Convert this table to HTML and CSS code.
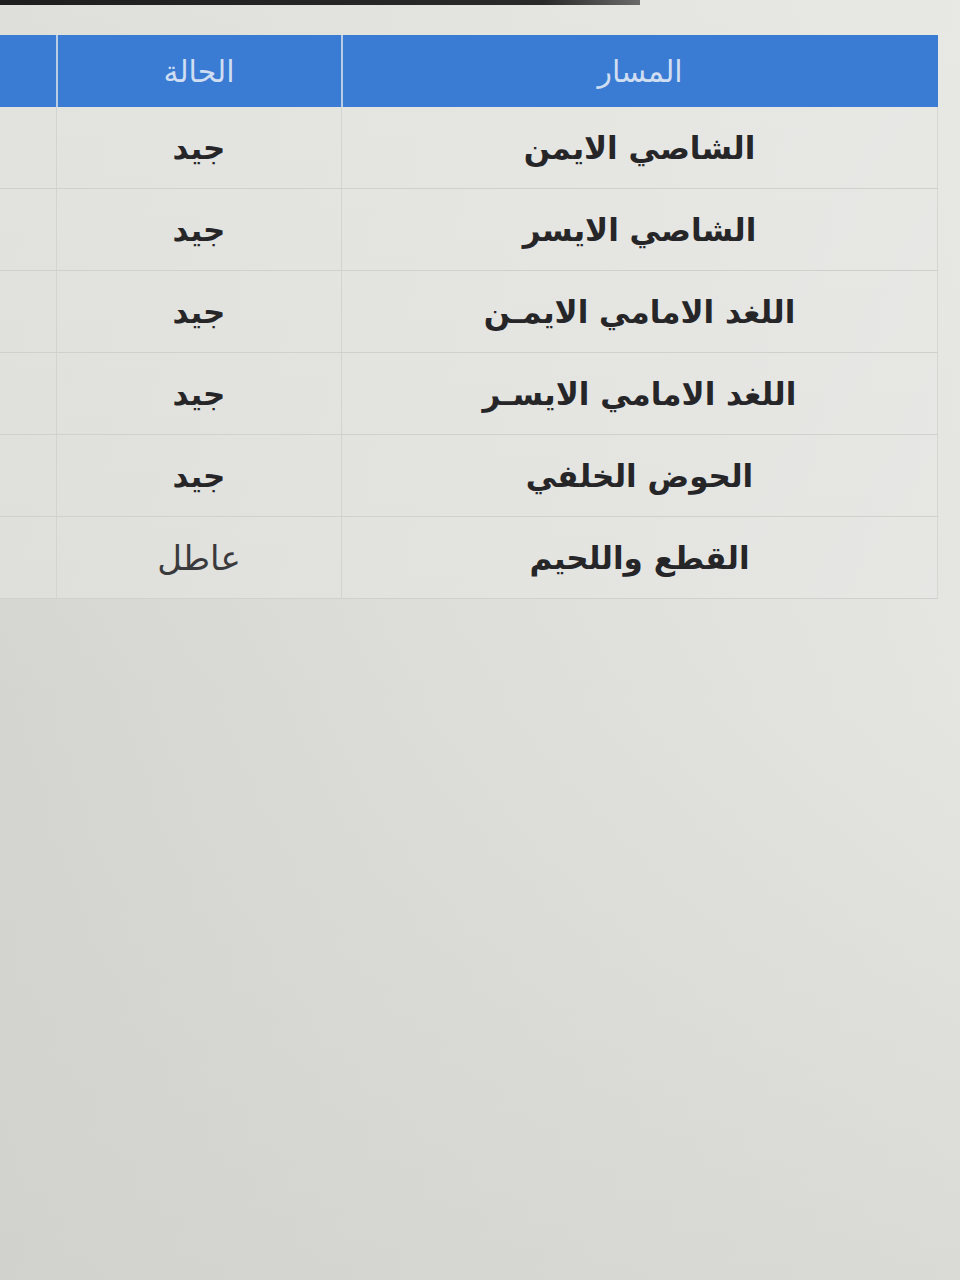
FILE: index.html
```html
<!DOCTYPE html>
<html lang="ar" dir="rtl">
<head>
<meta charset="utf-8">
<title>المسار</title>
<link rel="stylesheet" href="styles.css">
</head>
<body>
<div class="page">
  <div class="bezel"></div>
  <div class="frame">
    <table class="grid">
      <thead>
        <tr>
          <th class="c-path">المسار</th>
          <th class="c-state">الحالة</th>
          <th class="c-extra"></th>
        </tr>
      </thead>
      <tbody>
        <tr><td class="c-path">الشاصي الايمن</td><td class="c-state">جيد</td><td class="c-extra"></td></tr>
        <tr><td class="c-path">الشاصي الايسر</td><td class="c-state">جيد</td><td class="c-extra"></td></tr>
        <tr><td class="c-path">اللغد الامامي الايمـن</td><td class="c-state">جيد</td><td class="c-extra"></td></tr>
        <tr><td class="c-path">اللغد الامامي الايسـر</td><td class="c-state">جيد</td><td class="c-extra"></td></tr>
        <tr><td class="c-path">الحوض الخلفي</td><td class="c-state">جيد</td><td class="c-extra"></td></tr>
        <tr><td class="c-path">القطع واللحيم</td><td class="c-state light">عاطل</td><td class="c-extra"></td></tr>
      </tbody>
    </table>
  </div>
</div>
</body>
</html>
```

FILE: styles.css
```css
html, body {
  margin: 0;
  padding: 0;
}
body {
  width: 960px;
  height: 1280px;
  overflow: hidden;
  background: linear-gradient(100deg, #d2d3ce 0%, #dcdcd8 45%, #e6e6e3 100%);
  font-family: "DejaVu Sans", "Liberation Sans", sans-serif;
}
.page {
  display: flex;
  flex-direction: column;
  height: 1280px;
  background: linear-gradient(180deg, rgba(238,238,235,0.45) 0%, rgba(214,215,210,0.0) 55%, rgba(203,204,199,0.45) 100%);
}
.bezel {
  height: 5px;
  width: 640px;
  margin-right: 320px;
  background: linear-gradient(90deg, #1e1e1e, #2a2a2a 85%, #6a6a68);
}
.frame {
  margin-top: 30px;
  padding-right: 22px;
  display: flex;
  justify-content: flex-start;
  overflow: hidden;
}
.grid {
  direction: rtl;
  width: 1000px;
  flex: 0 0 1000px;
  border-collapse: collapse;
  table-layout: fixed;
}
.grid th {
  background: #3a7bd4;
  color: #cfdef2;
  font-weight: normal;
  font-size: 30px;
  height: 72px;
  padding: 0;
  border-left: 2px solid #b9cce6;
  text-align: center;
}
.grid th:last-child {
  border-left: none;
}
.grid td {
  height: 81px;
  padding: 0;
  text-align: center;
  font-size: 31px;
  font-weight: bold;
  color: #262629;
  background: rgba(232,232,229,0.5);
  border-bottom: 1px solid #d0d0cc;
  border-left: 1px solid #d3d3cf;
}
.grid td:first-child {
  border-right: 1px solid #d6d6d2;
}
.grid td.light {
  font-weight: normal;
  font-size: 34px;
  color: #3a3a3c;
}
.c-path { width: 595px; }
.c-state { width: 283px; }
.c-extra { width: auto; }
```
